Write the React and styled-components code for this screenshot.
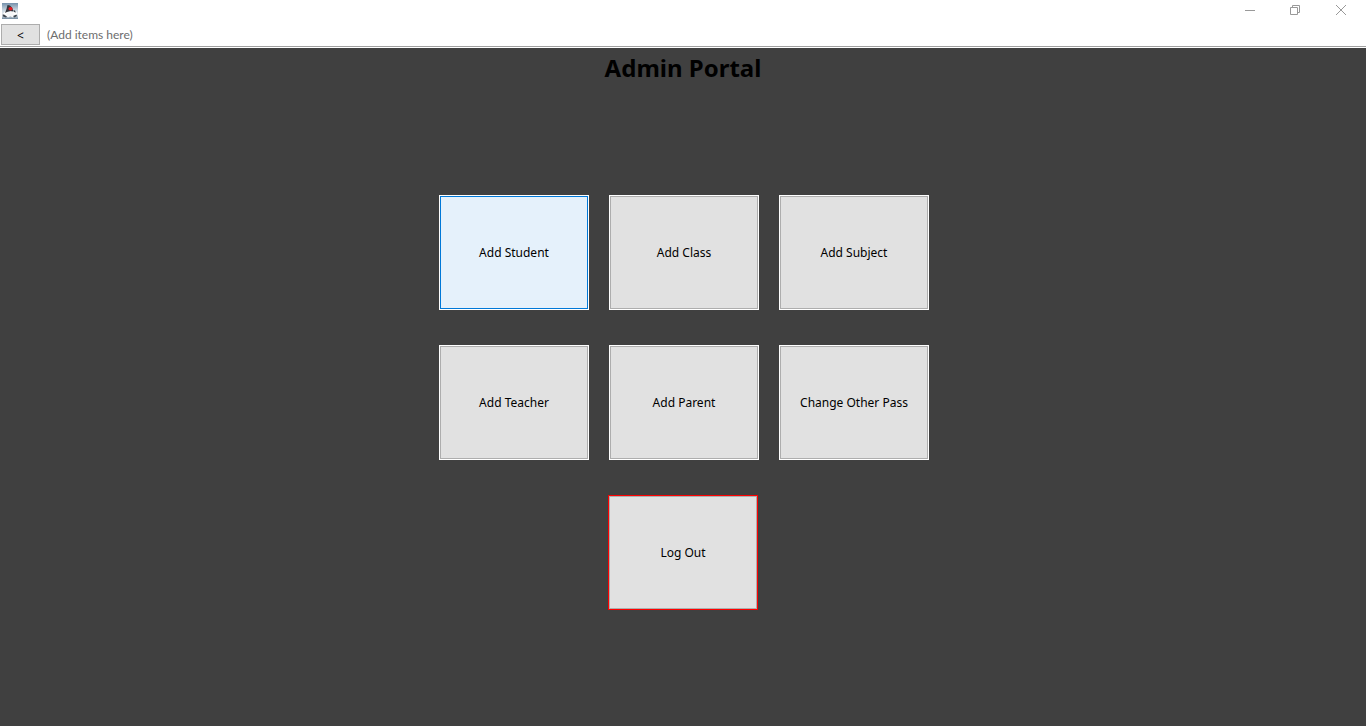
import React from "react";
import styled, { createGlobalStyle } from "styled-components";

const GlobalStyle = createGlobalStyle`
  *, *::before, *::after { box-sizing: border-box; }
  html, body, #root { height: 100%; }
  body { margin: 0; background: #404040; }
`;

const tahoma = `"DejaVu Sans Condensed", "DejaVu Sans", sans-serif`;
const noto = `"Noto Sans", "Open Sans", sans-serif`;

const Window = styled.div`
  display: flex;
  flex-direction: column;
  min-height: 100%;
`;

const TitleBar = styled.header`
  display: flex;
  justify-content: space-between;
  height: 23px;
  padding-left: 2px;
  background: #fff;
`;

const AppIcon = styled.svg`
  width: 16px;
  height: 16px;
  margin-top: 3px;
`;

const WindowControls = styled.div`
  display: flex;
  padding-right: 2px;
`;

const ControlButton = styled.button`
  display: flex;
  justify-content: center;
  width: 46px;
  height: 23px;
  padding: 4px 0 0;
  border: 0;
  background: none;
`;

const Toolbar = styled.nav`
  display: flex;
  align-items: flex-start;
  gap: 7px;
  height: 25px;
  padding: 1px 0 0 1px;
  background: #fff;
  border-bottom: 1px solid #fff;
  box-shadow: inset 0 -1px 0 #a0a0a0;
`;

const BackButton = styled.button`
  width: 39px;
  height: 21px;
  padding: 0;
  border: 1px solid #adadad;
  background: #e1e1e1;
  color: #000;
  font: 12px/21px ${noto};
`;

const ToolbarHint = styled.span`
  color: #6d6d6d;
  font: 12px/21px Lato, "Open Sans", sans-serif;
`;

const Content = styled.main`
  flex: 1;
  display: flex;
  flex-direction: column;
  align-items: center;
  gap: 35px;
  background: #404040;
`;

const Heading = styled.h1`
  margin: 0 0 72px;
  color: #000;
  font: bold 24px/40px ${noto};
`;

const ActionGrid = styled.div`
  display: grid;
  grid-template-columns: repeat(3, 150px);
  gap: 35px 20px;
  padding-left: 2px;
`;

const ActionButton = styled.button`
  height: 115px;
  padding: 0;
  border: 1px solid #fff;
  box-shadow: inset 0 0 0 1px ${(p) => (p.$active ? "#0078d7" : "#adadad")};
  background: ${(p) => (p.$active ? "#e5f1fb" : "#e1e1e1")};
  color: #000;
  font: 12px/16px ${tahoma};
  font-family: ${noto};
`;

const LogOutButton = styled(ActionButton)`
  width: 150px;
  border-color: #f00;
`;

const actions = [
  { label: "Add Student", active: true },
  { label: "Add Class" },
  { label: "Add Subject" },
  { label: "Add Teacher" },
  { label: "Add Parent" },
  { label: "Change Other Pass" },
];

function JavaIcon() {
  return (
    <AppIcon viewBox="0 0 16 16" aria-hidden="true">
      <defs>
        <linearGradient id="tile" x1="0" y1="0" x2="0" y2="1">
          <stop offset="0" stopColor="#7591ab" />
          <stop offset="0.45" stopColor="#c9d6e0" />
          <stop offset="0.75" stopColor="#e6ecf0" />
          <stop offset="1" stopColor="#6f879c" />
        </linearGradient>
      </defs>
      <rect width="16" height="16" fill="url(#tile)" />
      <path d="M0.5 11.5L3 8.5L5.5 9L5 14L2 13.5Z M10.5 8.5L14 8L15.5 11L14 13.5L11 13.5Z" fill="#fff" />
      <path d="M5 8.5H11L12 12.5L10.5 14.5L8.5 13L6 14.5L4.5 13Z" fill="#f7f8f9" />
      <path d="M5.5 2L8 2.5L10 4.5L11.5 8.5L8.5 8L5 9L3 10L4.5 6Z" fill="#34363d" />
      <path d="M11.5 7L13 7.5L14 9.5L12 9Z M0.5 11.5L2 11.5L5 13.5L4 14.5L1 13.5Z M11 13L14.5 11.5L15 13L12.5 14.5Z" fill="#3e454d" />
      <ellipse cx="8.5" cy="5.7" rx="2.1" ry="1.8" fill="#e51b23" />
    </AppIcon>
  );
}

function ControlIcon({ children }) {
  return (
    <svg width="12" height="12" viewBox="0 0 12 12" fill="none" stroke="#999" aria-hidden="true">
      {children}
    </svg>
  );
}

export default function App() {
  return (
    <Window>
      <GlobalStyle />
      <TitleBar>
        <JavaIcon />
        <WindowControls>
          <ControlButton aria-label="Minimize">
            <ControlIcon><path d="M2 6.5H12" /></ControlIcon>
          </ControlButton>
          <ControlButton aria-label="Restore">
            <ControlIcon><path d="M1.5 3.5H8.5V10.5H1.5ZM3.5 3.5V1.5H10.5V8.5H8.5" /></ControlIcon>
          </ControlButton>
          <ControlButton aria-label="Close">
            <ControlIcon><path d="M1 1L11 11M11 1L1 11" /></ControlIcon>
          </ControlButton>
        </WindowControls>
      </TitleBar>
      <Toolbar>
        <BackButton>&lt;</BackButton>
        <ToolbarHint>(Add items here)</ToolbarHint>
      </Toolbar>
      <Content>
        <Heading>Admin Portal</Heading>
        <ActionGrid>
          {actions.map(({ label, active }) => (
            <ActionButton key={label} $active={active}>
              {label}
            </ActionButton>
          ))}
        </ActionGrid>
        <LogOutButton>Log Out</LogOutButton>
      </Content>
    </Window>
  );
}
